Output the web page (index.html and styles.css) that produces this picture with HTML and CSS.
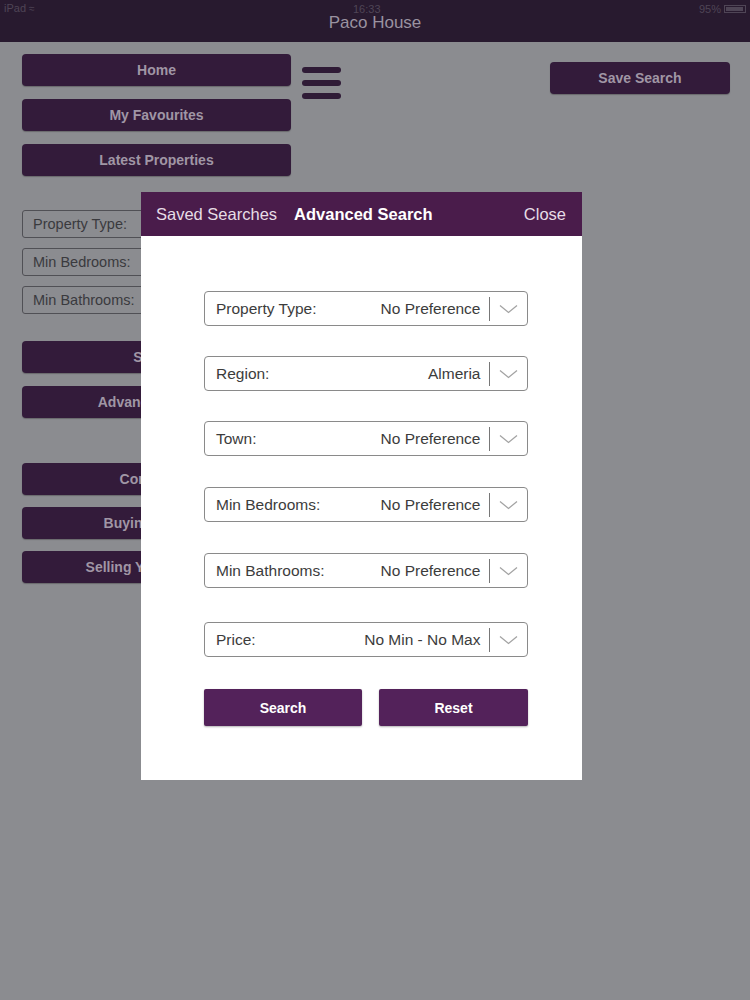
FILE: index.html
```html
<!DOCTYPE html>
<html lang="en">
<head>
    <meta charset="UTF-8">
    <meta name="viewport" content="width=device-width, initial-scale=1.0">
    <title>Paco House</title>
    <link rel="stylesheet" href="styles.css">
</head>
<body>

<div class="topbar">
    <div class="status">
        <span class="carrier">iPad <span class="wifi">&#8776;</span></span>
        <span class="clock">16:33</span>
        <span class="battery">95% <span class="cell"><span class="fill"></span></span></span>
    </div>
    <div class="title">Paco House</div>
</div>

<div class="page">
    <div class="sidebar">
        <div class="menu">
            <button class="btn">Home</button>
            <button class="btn">My Favourites</button>
            <button class="btn">Latest Properties</button>
        </div>

        <div class="quick">
            <div class="field">Property Type:</div>
            <div class="field">Min Bedrooms:</div>
            <div class="field">Min Bathrooms:</div>
        </div>

        <div class="menu gap-top">
            <button class="btn">Search</button>
            <button class="btn">Advanced Search</button>
        </div>

        <div class="menu tight gap-top-lg">
            <button class="btn">Contact Us</button>
            <button class="btn">Buying in Spain</button>
            <button class="btn">Selling Your Property</button>
        </div>
    </div>

    <div class="burger">
        <span></span>
        <span></span>
        <span></span>
    </div>

    <div class="spacer"></div>

    <button class="btn save">Save Search</button>
</div>

<!-- popup over the page -->
<div class="modal">
    <div class="modal-head">
        <span class="tab">Saved Searches</span>
        <span class="tab active">Advanced Search</span>
        <span class="close">Close</span>
    </div>

    <div class="modal-body">
        <div class="select">
            <span class="label">Property Type:</span>
            <span class="value">No Preference</span>
            <span class="divider"></span>
            <svg class="chev" width="19" height="10" viewBox="0 0 19 10"><path d="M1 1.5 L9.5 8.5 L18 1.5" fill="none" stroke="#a3a3a3" stroke-width="1.3"/></svg>
        </div>
        <div class="select">
            <span class="label">Region:</span>
            <span class="value">Almeria</span>
            <span class="divider"></span>
            <svg class="chev" width="19" height="10" viewBox="0 0 19 10"><path d="M1 1.5 L9.5 8.5 L18 1.5" fill="none" stroke="#a3a3a3" stroke-width="1.3"/></svg>
        </div>
        <div class="select">
            <span class="label">Town:</span>
            <span class="value">No Preference</span>
            <span class="divider"></span>
            <svg class="chev" width="19" height="10" viewBox="0 0 19 10"><path d="M1 1.5 L9.5 8.5 L18 1.5" fill="none" stroke="#a3a3a3" stroke-width="1.3"/></svg>
        </div>
        <div class="select">
            <span class="label">Min Bedrooms:</span>
            <span class="value">No Preference</span>
            <span class="divider"></span>
            <svg class="chev" width="19" height="10" viewBox="0 0 19 10"><path d="M1 1.5 L9.5 8.5 L18 1.5" fill="none" stroke="#a3a3a3" stroke-width="1.3"/></svg>
        </div>
        <div class="select">
            <span class="label">Min Bathrooms:</span>
            <span class="value">No Preference</span>
            <span class="divider"></span>
            <svg class="chev" width="19" height="10" viewBox="0 0 19 10"><path d="M1 1.5 L9.5 8.5 L18 1.5" fill="none" stroke="#a3a3a3" stroke-width="1.3"/></svg>
        </div>
        <div class="select">
            <span class="label">Price:</span>
            <span class="value">No Min - No Max</span>
            <span class="divider"></span>
            <svg class="chev" width="19" height="10" viewBox="0 0 19 10"><path d="M1 1.5 L9.5 8.5 L18 1.5" fill="none" stroke="#a3a3a3" stroke-width="1.3"/></svg>
        </div>

        <div class="actions">
            <button class="action search">Search</button>
            <button class="action reset">Reset</button>
        </div>
    </div>
</div>

</body>
</html>
```

FILE: styles.css
```css
body {
    margin: 0;
    width: 750px;
    height: 1000px;
    background-color: #8b8c90;
    font-family: "Liberation Sans", Arial, sans-serif;
    position: relative;
    overflow: hidden;
}

.topbar {
    height: 42px;
    background-color: #281a2f;
    position: relative;
}

.status {
    display: flex;
    justify-content: space-between;
    align-items: center;
    height: 17px;
    padding: 0 4px;
    font-size: 11px;
    line-height: 10px;
    color: #4f4556;
}

.wifi {
    font-size: 10px;
}

.battery {
    display: flex;
    align-items: center;
    gap: 3px;
}

.cell {
    display: inline-block;
    width: 22px;
    height: 8px;
    border: 1px solid #4f4556;
    padding: 1px;
    box-sizing: border-box;
}

.fill {
    display: block;
    height: 100%;
    width: 95%;
    background-color: #4f4556;
}

.title {
    position: absolute;
    left: 0;
    right: 0;
    top: 14px;
    text-align: center;
    font-size: 17px;
    line-height: 17px;
    color: #9a92a0;
}

.page {
    display: flex;
    align-items: flex-start;
    padding: 12px 20px 0 22px;
}

.sidebar {
    width: 269px;
}

.menu {
    display: flex;
    flex-direction: column;
    gap: 13px;
}

.menu.tight {
    gap: 12px;
}

.btn {
    height: 32px;
    width: 100%;
    border: none;
    border-radius: 4px;
    background-color: #331b3a;
    color: #a096a5;
    font-family: "Liberation Sans", Arial, sans-serif;
    font-weight: bold;
    font-size: 14px;
    box-shadow: 0 1px 1px rgba(0, 0, 0, 0.25);
}

.quick {
    display: flex;
    flex-direction: column;
    gap: 10px;
    margin-top: 34px;
}

.field {
    height: 28px;
    border: 1px solid #505055;
    border-radius: 3px;
    box-sizing: border-box;
    padding-left: 10px;
    line-height: 26px;
    font-size: 14.5px;
    color: #3a3a3e;
}

.gap-top {
    margin-top: 27px;
}

.gap-top-lg {
    margin-top: 45px;
}

.burger {
    display: flex;
    flex-direction: column;
    gap: 7px;
    margin: 13px 0 0 11px;
}

.burger span {
    display: block;
    width: 39px;
    height: 6px;
    border-radius: 3px;
    background-color: #2f1b36;
}

.spacer {
    flex: 1;
}

.save {
    width: 180px;
    margin-top: 8px;
}

/* modal */

.modal {
    position: absolute;
    left: 141px;
    top: 192px;
    width: 441px;
    height: 588px;
    background-color: #ffffff;
}

.modal-head {
    display: flex;
    align-items: center;
    height: 44px;
    background-color: #4a1c4b;
    padding: 0 16px 0 15px;
    font-size: 16.5px;
}

.tab {
    color: #e6dde6;
    margin-right: 17px;
}

.tab.active {
    color: #ffffff;
    font-weight: bold;
}

.close {
    margin-left: auto;
    color: #e6dde6;
}

.modal-body {
    display: flex;
    flex-direction: column;
    gap: 30px;
    padding: 55px 54px 0 63px;
}

.select {
    display: flex;
    align-items: center;
    height: 35px;
    border: 1.5px solid #8a8a8a;
    border-radius: 4px;
    box-sizing: border-box;
    padding: 0 9px 0 11px;
    font-size: 15.5px;
    color: #3c3c3c;
}

.select:nth-child(4),
.select:nth-child(5) {
    margin-top: 1px;
}

.select:nth-child(6) {
    margin-top: 4px;
}

.value {
    margin-left: auto;
}

.divider {
    width: 1.5px;
    height: 24px;
    background-color: #777777;
    margin: 0 9px 0 8px;
}

.chev {
    display: block;
}

.actions {
    display: flex;
    justify-content: space-between;
    margin-top: 2px;
}

.action {
    height: 37px;
    border: none;
    border-radius: 2px;
    background-color: #53225a;
    color: #ffffff;
    font-family: "Liberation Sans", Arial, sans-serif;
    font-weight: bold;
    font-size: 14px;
    box-shadow: 0 1px 2px rgba(0, 0, 0, 0.3);
}

.search {
    width: 158px;
}

.reset {
    width: 149px;
}
```
